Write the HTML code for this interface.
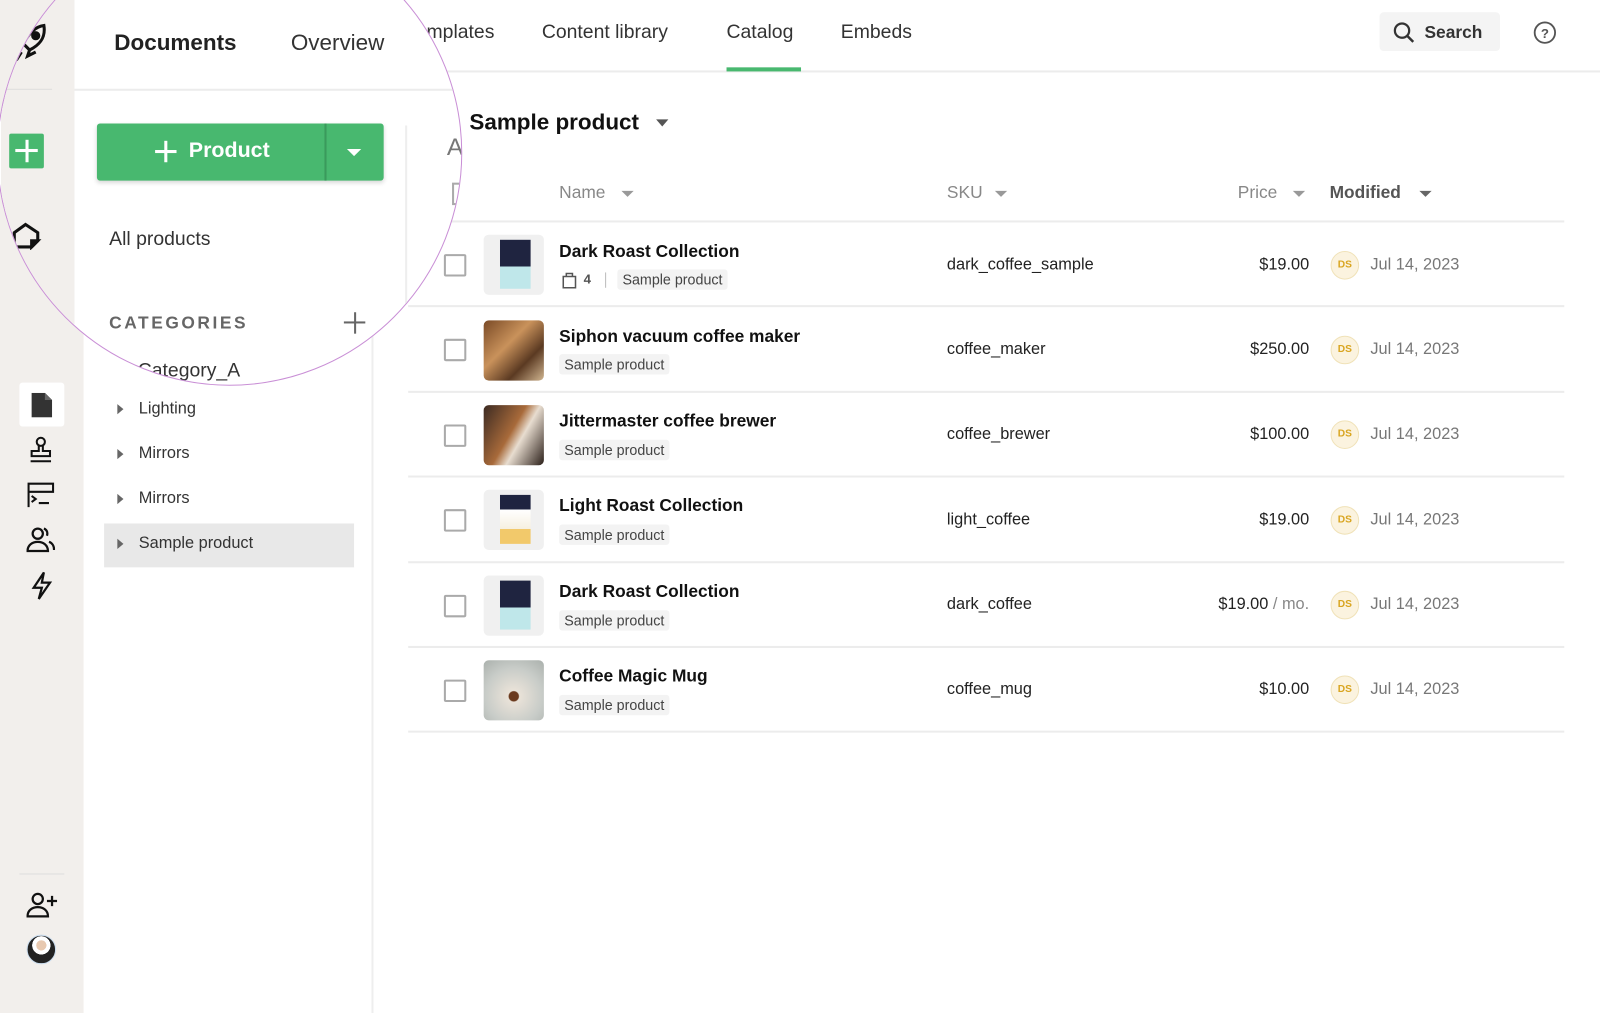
<!DOCTYPE html>
<html><head><meta charset="utf-8"><style>
*{margin:0;padding:0;box-sizing:border-box}
body{width:1600px;height:993px;position:relative;overflow:hidden;background:#fff;font-family:"Liberation Sans",sans-serif;color:#1a1a1a}
#w{position:absolute;left:0;top:0;width:1568px;height:973px;transform:scale(1.0204);transform-origin:0 0}
.a{position:absolute}
.rail{left:0;top:0;width:82px;height:993px;background:#f2efec}
.side{left:82px;top:0;width:284px;height:993px;background:#fff;border-right:2px solid #eeeeee}
.cat{font-size:16px;color:#333;left:136px}
.tri{width:0;height:0;border-left:6px solid #666;border-top:5px solid transparent;border-bottom:5px solid transparent;left:115px}
.tab{top:21px;font-size:19px;color:#333}
.hline{height:2px;background:#ececec}
.cb{left:435px;width:22px;height:22px;border:2px solid #aaa;border-radius:2px}
.th{left:474px;width:59px;height:59px;border-radius:5px;background:#f0f0f0;overflow:hidden}
.t1{left:548px;font-size:17px;font-weight:bold;color:#111}
.tag{font-size:14px;color:#444;background:#f3f3f3;padding:2px 5px;border-radius:3px}
.sku{left:928px;font-size:16px;color:#222}
.pr{right:285px;font-size:16px;color:#222}
.ds{left:1304px;width:28px;height:28px;border-radius:50%;background:#fbf3df;border:1px solid #f0e2b8;color:#d9a520;font-size:10px;font-weight:bold;text-align:center;line-height:26px}
.dt{left:1343px;font-size:16px;color:#777}
.hd{top:179px;font-size:17px;color:#888}
.car{width:0;height:0;border-top:6px solid #999;border-left:6px solid transparent;border-right:6px solid transparent}
</style></head><body><div id="w">
<div class="a rail"></div>
<div class="a side"></div>
<div class="a hline" style="left:70px;top:69px;width:1530px"></div>
<div class="a tab" style="left:418px">mplates</div>
<div class="a tab" style="left:531px">Content library</div>
<div class="a tab" style="left:712px">Catalog</div>
<div class="a" style="left:712px;top:66px;width:73px;height:4px;background:#48b86f"></div>
<div class="a tab" style="left:824px">Embeds</div>
<div class="a" style="left:1352px;top:12px;width:118px;height:38px;background:#f4f4f4;border-radius:4px"></div>
<svg class="a" style="left:1364px;top:20px" width="24" height="24" viewBox="0 0 24 24"><circle cx="10" cy="10" r="7" fill="none" stroke="#333" stroke-width="2.2"/><path d="M15 15l6 6" stroke="#333" stroke-width="2.4"/></svg>
<div class="a" style="left:1396px;top:22px;font-size:17px;font-weight:bold;color:#333">Search</div>
<svg class="a" style="left:1502px;top:20px" width="24" height="24" viewBox="0 0 24 24"><circle cx="12" cy="12" r="10" fill="none" stroke="#555" stroke-width="1.8"/><text x="12" y="17" font-size="13" font-weight="bold" text-anchor="middle" fill="#555" font-family="Liberation Sans">?</text></svg>

<div class="a" style="left:19px;top:375px;width:44px;height:43px;background:#fff;border-radius:3px"></div>
<svg class="a" style="left:30px;top:385px" width="22" height="24" viewBox="0 0 22 24"><path d="M1 0h13l7 7v17H1z" fill="#333"/><path d="M14 0v7h7" fill="#666"/></svg>
<svg class="a" style="left:26px;top:427px" width="28" height="28" viewBox="0 0 28 28" fill="none" stroke="#111" stroke-width="2"><circle cx="14" cy="6" r="4"/><path d="M12 10v5h-7v5h18v-5h-7v-5M4 25h20"/></svg>
<svg class="a" style="left:26px;top:472px" width="28" height="26" viewBox="0 0 28 26" fill="none" stroke="#111" stroke-width="2"><path d="M2 25V2h24v8H2M5 14l4 3-4 3M12 21h10"/></svg>
<svg class="a" style="left:26px;top:516px" width="28" height="26" viewBox="0 0 28 26" fill="none" stroke="#111" stroke-width="2.2"><circle cx="11" cy="7" r="5"/><path d="M1 24c0-6 5-9 10-9s10 3 10 9zM17 2c3 1 4 4 3 7M22 15c3 1 5 4 5 8"/></svg>
<svg class="a" style="left:30px;top:559px" width="22" height="30" viewBox="0 0 22 30" fill="none" stroke="#111" stroke-width="2.2"><path d="M13 2L3 17h8l-3 11 11-16h-8z"/></svg>
<div class="a" style="left:19px;top:856px;width:44px;height:1px;background:#ddd"></div>
<svg class="a" style="left:26px;top:874px" width="30" height="26" viewBox="0 0 30 26" fill="none" stroke="#111" stroke-width="2.2"><circle cx="11" cy="7" r="5"/><path d="M1 24c0-6 5-9 10-9s10 3 10 9zM25 4v10M20 9h10"/></svg>
<div class="a" style="left:26px;top:916px;width:29px;height:29px;border-radius:50%;background:radial-gradient(circle at 50% 35%,#e8c9b0 0 22%,#fff 23% 40%,#222 41%);border:1px solid #cde"></div>

<div class="a tri" style="top:396px"></div><div class="a cat" style="top:392px">Lighting</div>
<div class="a tri" style="top:440px"></div><div class="a cat" style="top:436px">Mirrors</div>
<div class="a tri" style="top:484px"></div><div class="a cat" style="top:480px">Mirrors</div>
<div class="a" style="left:102px;top:513px;width:245px;height:43px;background:#e8e8e8"></div>
<div class="a tri" style="top:528px"></div><div class="a cat" style="top:524px">Sample product</div>

<div class="a" style="left:460px;top:107px;font-size:22px;font-weight:bold;color:#111">Sample product</div>
<div class="a car" style="left:643px;top:117px;border-top-color:#555;border-width:7px 6px 0"></div>
<div class="a hd" style="left:548px">Name</div><div class="a car" style="left:609px;top:187px"></div>
<div class="a hd" style="left:928px">SKU</div><div class="a car" style="left:975px;top:187px"></div>
<div class="a hd" style="left:1213px">Price</div><div class="a car" style="left:1267px;top:187px"></div>
<div class="a hd" style="left:1303px;font-weight:bold;color:#555">Modified</div><div class="a car" style="left:1391px;top:187px;border-top-color:#666"></div>
<div class="a hline" style="left:400px;top:216px;width:1133px"></div>

<div class="a" style="left:0;top:217px;width:1568px;height:84px">
 <div class="a cb" style="top:32px"></div>
 <div class="a th" style="top:13px"><div class="a" style="left:16px;top:5px;width:30px;height:48px;background:linear-gradient(#1f2440 0 55%,#bfe7ea 55%)"></div></div>
 <div class="a t1" style="top:20px">Dark Roast Collection</div>
 <svg class="a" style="left:550px;top:49px" width="16" height="17" viewBox="0 0 16 17" fill="none" stroke="#555" stroke-width="1.5"><path d="M2 5h12v11H2zM5 5V2h6v3"/></svg>
 <div class="a" style="left:572px;top:49px;font-size:13px;font-weight:bold;color:#555">4</div>
 <div class="a" style="left:593px;top:50px;width:1px;height:15px;background:#bbb"></div>
 <div class="a tag" style="left:605px;top:47px">Sample product</div>
 <div class="a sku" style="top:34px">dark_coffee_sample</div>
 <div class="a pr" style="top:34px">$19.00</div>
 <div class="a ds" style="top:29px">DS</div><div class="a dt" style="top:34px">Jul 14, 2023</div>
 <div class="a hline" style="left:400px;top:82px;width:1133px"></div>
</div>
<div class="a" style="left:0;top:300px;width:1568px;height:84px">
 <div class="a cb" style="top:32px"></div>
 <div class="a th" style="top:14px;background:linear-gradient(135deg,#7a4a26,#c9925b 40%,#5b3a22 70%,#d0b590)"></div>
 <div class="a t1" style="top:20px">Siphon vacuum coffee maker</div>
 <div class="a tag" style="left:548px;top:47px">Sample product</div>
 <div class="a sku" style="top:34px">coffee_maker</div>
 <div class="a pr" style="top:34px">$250.00</div>
 <div class="a ds" style="top:29px">DS</div><div class="a dt" style="top:34px">Jul 14, 2023</div>
 <div class="a hline" style="left:400px;top:83px;width:1133px"></div>
</div>
<div class="a" style="left:0;top:384px;width:1568px;height:84px">
 <div class="a cb" style="top:32px"></div>
 <div class="a th" style="top:13px;background:linear-gradient(120deg,#3b2a22,#a86a3a 45%,#e8ddd0 60%,#2a1e18)"></div>
 <div class="a t1" style="top:19px">Jittermaster coffee brewer</div>
 <div class="a tag" style="left:548px;top:47px">Sample product</div>
 <div class="a sku" style="top:33px">coffee_brewer</div>
 <div class="a pr" style="top:33px">$100.00</div>
 <div class="a ds" style="top:28px">DS</div><div class="a dt" style="top:33px">Jul 14, 2023</div>
 <div class="a hline" style="left:400px;top:82px;width:1133px"></div>
</div>
<div class="a" style="left:0;top:467px;width:1568px;height:84px">
 <div class="a cb" style="top:32px"></div>
 <div class="a th" style="top:13px"><div class="a" style="left:16px;top:5px;width:30px;height:48px;background:linear-gradient(#1f2440 0 30%,#fff 30%,#f6f0e0 70%,#f2c96b 70%)"></div></div>
 <div class="a t1" style="top:19px">Light Roast Collection</div>
 <div class="a tag" style="left:548px;top:47px">Sample product</div>
 <div class="a sku" style="top:34px">light_coffee</div>
 <div class="a pr" style="top:34px">$19.00</div>
 <div class="a ds" style="top:29px">DS</div><div class="a dt" style="top:34px">Jul 14, 2023</div>
 <div class="a hline" style="left:400px;top:83px;width:1133px"></div>
</div>
<div class="a" style="left:0;top:551px;width:1568px;height:84px">
 <div class="a cb" style="top:32px"></div>
 <div class="a th" style="top:13px"><div class="a" style="left:16px;top:5px;width:30px;height:48px;background:linear-gradient(#1f2440 0 55%,#bfe7ea 55%)"></div></div>
 <div class="a t1" style="top:19px">Dark Roast Collection</div>
 <div class="a tag" style="left:548px;top:47px">Sample product</div>
 <div class="a sku" style="top:33px">dark_coffee</div>
 <div class="a pr" style="top:33px">$19.00 <span style="color:#888">/ mo.</span></div>
 <div class="a ds" style="top:28px">DS</div><div class="a dt" style="top:33px">Jul 14, 2023</div>
 <div class="a hline" style="left:400px;top:82px;width:1133px"></div>
</div>
<div class="a" style="left:0;top:634px;width:1568px;height:84px">
 <div class="a cb" style="top:32px"></div>
 <div class="a th" style="top:13px;background:radial-gradient(circle at 50% 60%,#6b3a1e 0 10%,#e9e2d8 12%,#c8ccc8 60%,#aab0ac)"></div>
 <div class="a t1" style="top:19px">Coffee Magic Mug</div>
 <div class="a tag" style="left:548px;top:47px">Sample product</div>
 <div class="a sku" style="top:33px">coffee_mug</div>
 <div class="a pr" style="top:33px">$10.00</div>
 <div class="a ds" style="top:28px">DS</div><div class="a dt" style="top:33px">Jul 14, 2023</div>
 <div class="a hline" style="left:400px;top:82px;width:1133px"></div>
</div>

<div class="a" style="left:-3px;top:-78px;width:456px;height:456px;border-radius:50%;overflow:hidden;border:1px solid #c98fd6;background:#fff">
 <div class="a" style="left:3px;top:78px;width:460px;height:400px">
  <div class="a" style="left:0;top:-10px;width:72px;height:420px;background:#f2efec"></div>
  <div class="a" style="left:72px;top:86px;width:400px;height:2px;background:#ececec"></div>
  <div class="a" style="left:0;top:86px;width:50px;height:1px;background:#ddd"></div>
  <svg class="a" style="left:12px;top:22px" width="34" height="38" viewBox="0 0 34 38" fill="none" stroke="#111" stroke-width="3"><path d="M30 2c-8 1-15 8-20 18l6 6c10-5 16-12 14-24zM10 20l-6 2 4-8M16 26l-2 6 8-4M8 28l-5 8"/><circle cx="22" cy="12" r="3" fill="#111"/></svg>
  <div class="a" style="left:111px;top:28px;font-size:22px;font-weight:bold;color:#222">Documents</div>
  <div class="a" style="left:284px;top:28px;font-size:22px;color:#333">Overview</div>
  <div class="a" style="left:8px;top:130px;width:34px;height:34px;background:#48b86f;border-radius:2px"></div>
  <div class="a" style="left:14px;top:145px;width:22px;height:3px;background:#fff"></div>
  <div class="a" style="left:23.5px;top:136px;width:3px;height:22px;background:#fff"></div>
  <svg class="a" style="left:10px;top:216px" width="30" height="28" viewBox="0 0 30 28" fill="none" stroke="#111" stroke-width="3"><path d="M3 25V11L14 3l12 8v8l-6 6z"/><path d="M20 25l6-6h-6z" fill="#111"/></svg>
  <svg class="a" style="left:22px;top:268px" width="22" height="30" viewBox="0 0 22 30" fill="none" stroke="#111" stroke-width="3"><path d="M4 4l8 6M14 10l-6 8M8 18v10h10"/></svg>
  <div class="a" style="left:94px;top:120px;width:281px;height:56px;background:#48b86f;border-radius:3px;box-shadow:0 2px 4px rgba(0,0,0,.15)"></div>
  <div class="a" style="left:317px;top:120px;width:2px;height:56px;background:#3a9a5c"></div>
  <div class="a" style="left:151px;top:146px;width:21px;height:3px;background:#fff"></div>
  <div class="a" style="left:160px;top:137px;width:3px;height:21px;background:#fff"></div>
  <div class="a" style="left:184px;top:135px;font-size:21px;font-weight:bold;color:#fff">Product</div>
  <div class="a" style="left:339px;top:145px;border-top:7px solid #fff;border-left:7px solid transparent;border-right:7px solid transparent"></div>
  <div class="a" style="left:106px;top:223px;font-size:19px;color:#333">All products</div>
  <div class="a" style="left:106px;top:306px;font-size:17px;font-weight:bold;letter-spacing:2.5px;color:#666">CATEGORIES</div>
  <div class="a" style="left:336px;top:314px;width:21px;height:2px;background:#666"></div>
  <div class="a" style="left:345.5px;top:305px;width:2px;height:21px;background:#666"></div>
  <div class="a" style="left:115px;top:352px;border-left:7px solid #666;border-top:6px solid transparent;border-bottom:6px solid transparent"></div>
  <div class="a" style="left:134px;top:352px;font-size:19px;color:#333">Category_A</div>
  <div class="a" style="left:396px;top:122px;width:2px;height:300px;background:#eee"></div>
  <div class="a" style="left:437px;top:130px;font-size:24px;color:#777">A</div>
  <div class="a" style="left:442px;top:178px;width:16px;height:22px;border:2px solid #aaa"></div>
 </div>
</div>
</div></body></html>
